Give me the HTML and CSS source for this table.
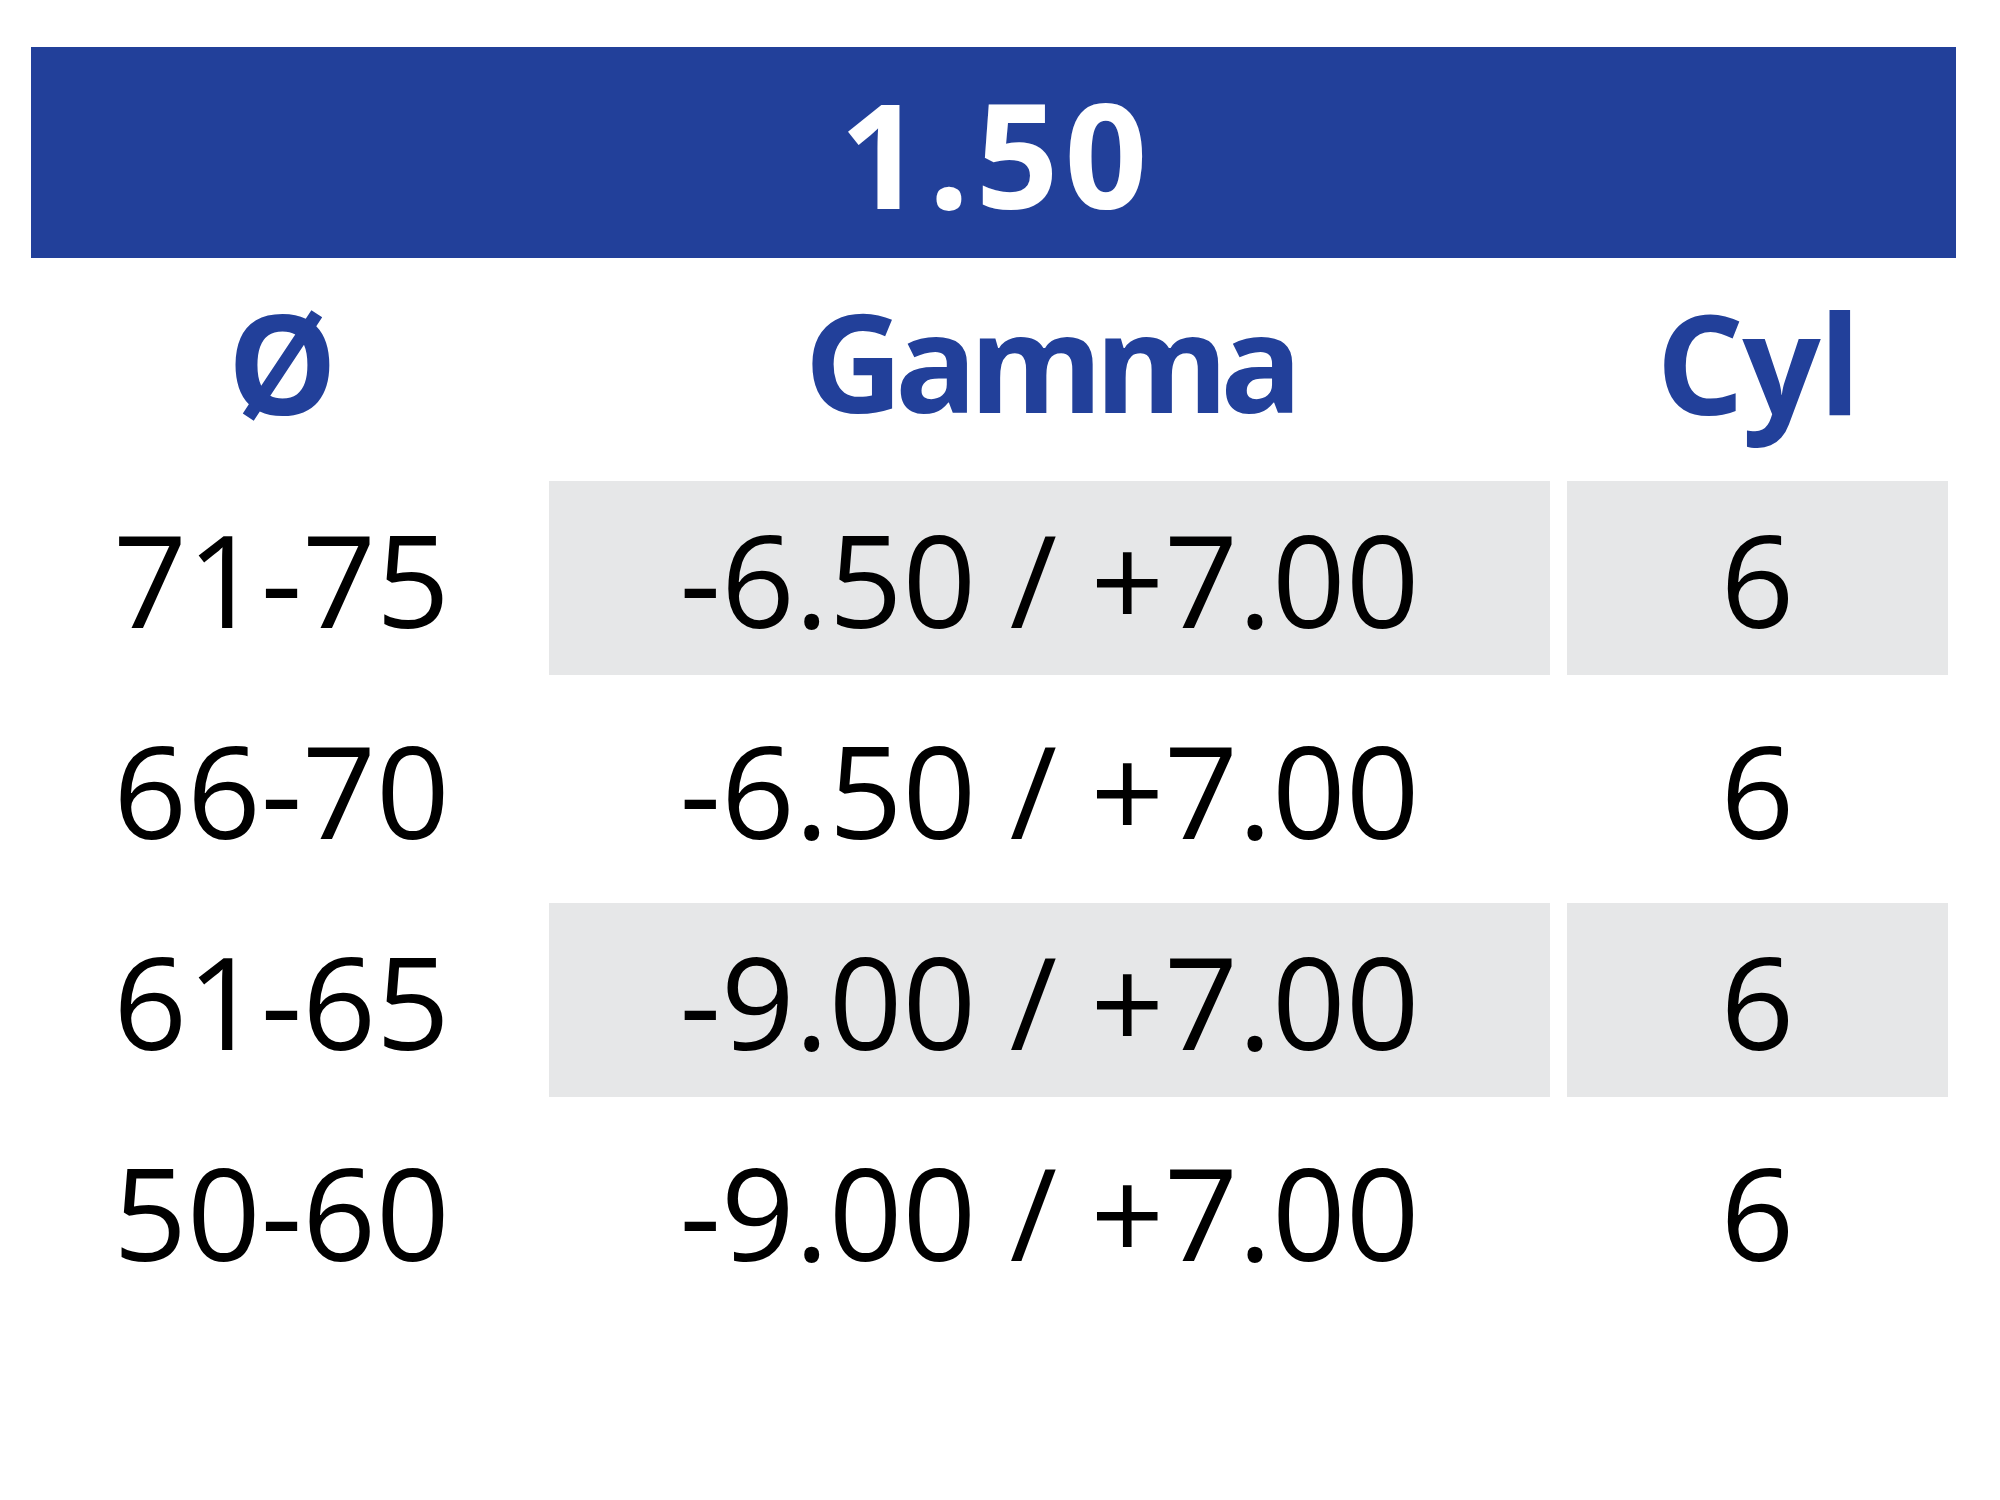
FILE: index.html
```html
<!DOCTYPE html>
<html lang="it">
<head>
<meta charset="utf-8">
<title>1.50</title>
<link rel="stylesheet" href="styles.css">
</head>
<body>
<div class="sheet">
  <div class="title">1.50</div>
  <div class="table">
    <div class="cell head">Ø</div>
    <div class="cell head tight">Gamma</div>
    <div class="cell head">Cyl</div>

    <div class="cell">71-75</div>
    <div class="cell shade">-6.50 / +7.00</div>
    <div class="cell shade">6</div>

    <div class="cell">66-70</div>
    <div class="cell">-6.50 / +7.00</div>
    <div class="cell">6</div>

    <div class="cell">61-65</div>
    <div class="cell shade">-9.00 / +7.00</div>
    <div class="cell shade">6</div>

    <div class="cell">50-60</div>
    <div class="cell">-9.00 / +7.00</div>
    <div class="cell">6</div>
  </div>
</div>
</body>
</html>
```
FILE: styles.css
```css
html, body {
  margin: 0;
  padding: 0;
  background: #ffffff;
}

.sheet {
  padding: 47px 0 0 31px;
  font-family: "Open Sans", "Noto Sans", sans-serif;
}

.title {
  width: 1925px;
  height: 211px;
  background: #22409a;
  color: #ffffff;
  font-weight: 700;
  font-size: 145px;
  display: flex;
  align-items: center;
  justify-content: center;
  letter-spacing: 6px;
  padding-left: 6px;
  box-sizing: border-box;
}

.table {
  display: grid;
  grid-template-columns: 501px 1001px 381px;
  grid-template-rows: 206px repeat(4, 194px);
  column-gap: 17px;
  row-gap: 17px;
}

.cell {
  display: flex;
  align-items: center;
  justify-content: center;
  font-size: 129px;
  color: #000000;
  line-height: 1;
}

.head {
  color: #22409a;
  font-weight: 700;
  font-size: 138px;
  letter-spacing: -2px;
}

.tight {
  font-size: 136px;
  letter-spacing: -8px;
}

.shade {
  background: #e6e7e8;
}
```
